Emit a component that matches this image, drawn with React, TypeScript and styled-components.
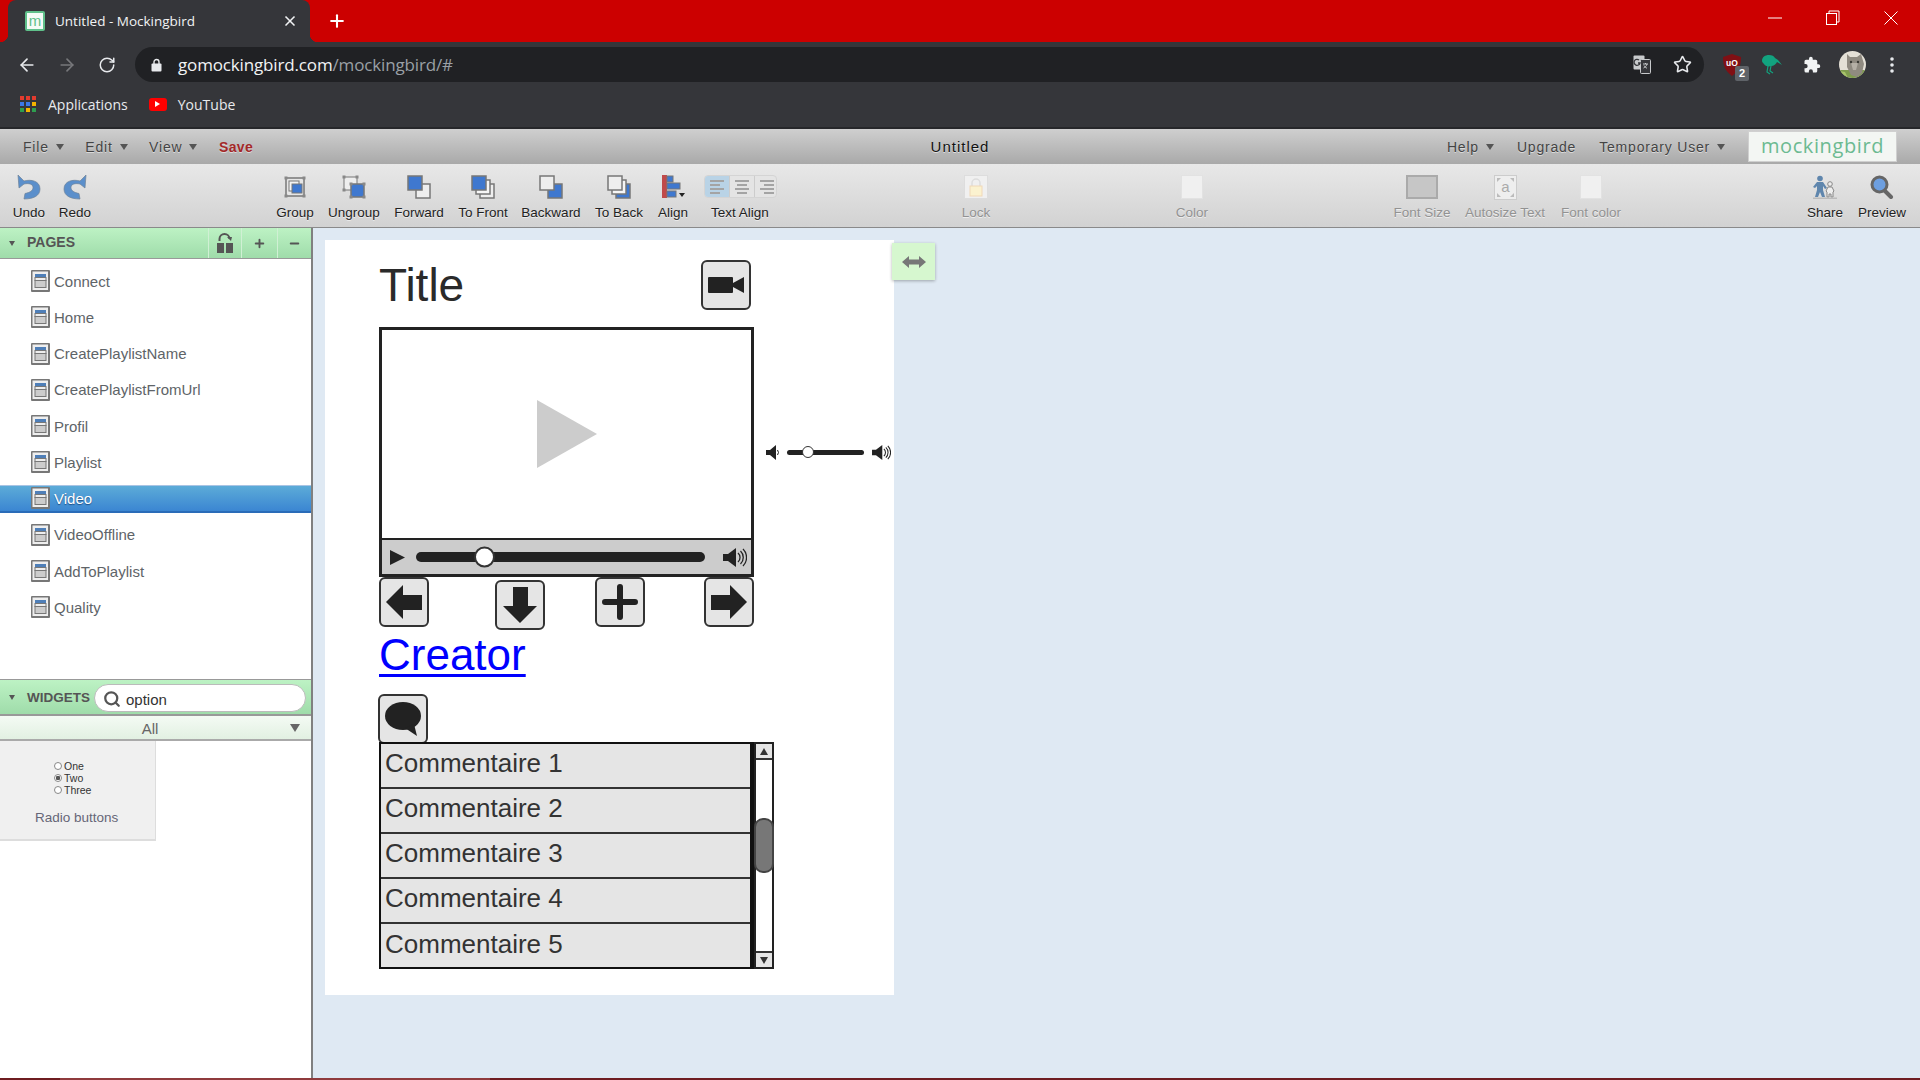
import React from 'react'
import styled, { createGlobalStyle } from 'styled-components'
import { ArrowLeft, ArrowRight, RotateCw, Star, Search, X, Plus, Minus } from 'lucide-react'

const PAGES = [
  'Connect',
  'Home',
  'CreatePlaylistName',
  'CreatePlaylistFromUrl',
  'Profil',
  'Playlist',
  'Video',
  'VideoOffline',
  'AddToPlaylist',
  'Quality',
]

const COMMENTS = ['Commentaire 1', 'Commentaire 2', 'Commentaire 3', 'Commentaire 4', 'Commentaire 5']

const APP_COLORS = ['#e33b2e', '#e33b2e', '#e33b2e', '#3b78e7', '#3b78e7', '#f4b400', '#2e9e4f', '#f4b400', '#2e9e4f']

const BLUE = '#3f78cf'
const EDGE = '#777'

const GroupIcon = () => (
  <svg width="24" height="24" viewBox="0 0 24 24">
    <rect x="3" y="3" width="18" height="18" fill="#e6e6e6" stroke={EDGE} strokeWidth="1.5" />
    <rect x="6" y="6" width="10" height="10" fill="#f4f4f4" stroke={EDGE} />
    <rect x="9" y="9" width="10" height="9" fill={BLUE} stroke={EDGE} />
    {[3, 21].map((x) => [3, 21].map((y) => <rect key={`${x}${y}`} x={x - 1.5} y={y - 1.5} width="3" height="3" fill="#888" />))}
  </svg>
)

const UngroupIcon = () => (
  <svg width="24" height="24" viewBox="0 0 24 24">
    <rect x="2" y="2" width="13" height="13" fill="#eee" stroke={EDGE} />
    <rect x="9" y="9" width="13" height="13" fill={BLUE} stroke={EDGE} strokeWidth="1.5" />
    {[[2, 2], [15, 2], [2, 15], [9, 9], [22, 9], [9, 22], [22, 22]].map(([x, y]) => (
      <rect key={`${x}${y}`} x={x - 1.5} y={y - 1.5} width="3" height="3" fill="#888" />
    ))}
  </svg>
)

const StackIcon = ({ top, middle }: { top: 'blue' | 'white'; middle?: boolean }) => {
  const upper = top === 'blue' ? BLUE : '#eee'
  const lower = top === 'blue' ? '#eee' : BLUE
  return (
    <svg width="24" height="24" viewBox="0 0 24 24">
      <rect x="9" y="9" width="14" height="14" fill={lower} stroke={EDGE} strokeWidth="1.5" />
      {middle && <rect x="5" y="5" width="14" height="14" fill="#f6f6f6" stroke={EDGE} strokeWidth="1.5" />}
      <rect x="1" y="1" width="14" height="14" fill={upper} stroke={EDGE} strokeWidth="1.5" />
    </svg>
  )
}

const AlignIcon = () => (
  <svg width="24" height="24" viewBox="0 0 24 24">
    <rect x="1" y="0" width="5" height="23" fill="#c04a4a" />
    <rect x="6" y="1" width="6" height="6" fill={BLUE} stroke={EDGE} />
    <rect x="6" y="8" width="13" height="6" fill={BLUE} stroke={EDGE} />
    <rect x="6" y="16" width="9" height="6" fill={BLUE} stroke={EDGE} />
    <path d="M18 18h6l-3 4z" fill="#222" />
  </svg>
)

const CurveArrow = ({ flip }: { flip?: boolean }) => (
  <svg width="24" height="25" viewBox="0 0 24 25" style={flip ? { transform: 'scaleX(-1)' } : undefined}>
    <path
      d="M1 0l1 13 5-4c5-1 9 0 9 3.500 0 3-3 5-8 6l-1 5.500c9 0 16-3 16-10 0-8-9-10-16-8z"
      fill="#5b8fcb"
      stroke="#6f8298"
      strokeWidth="0.7"
    />
  </svg>
)

const FadedLock = () => (
  <svg width="24" height="24" viewBox="0 0 24 24">
    <rect x="0.5" y="0.5" width="23" height="23" fill="#f0f0f0" stroke="#ddd" />
    <path d="M8 11V8a4 4 0 0 1 8 0v3" fill="none" stroke="#ddd" strokeWidth="1.5" />
    <rect x="6" y="11" width="12" height="10" fill="#fbf2cf" stroke="#f0d8b8" />
  </svg>
)

const AutosizeIcon = () => (
  <svg width="23" height="25" viewBox="0 0 23 25">
    <rect x="0.5" y="0.5" width="22" height="24" fill="#eee" stroke="#ccc" />
    <path d="M3 3h4l-4 4zM20 3h-4l4 4zM3 22h4l-4-4zM20 22h-4l4-4z" fill="#bbb" />
    <text x="11.5" y="17" fontSize="15" fill="#aaa" textAnchor="middle" fontFamily="'Liberation Sans', sans-serif">
      a
    </text>
  </svg>
)

const ShareIcon = () => (
  <svg width="26" height="24" viewBox="0 0 26 24">
    <circle cx="8" cy="3.5" r="2.8" fill="#5f86ad" />
    <path d="M5 7h6l4 6-2 1-2-3v4l2 7h-3l-2-5-2 5H3l2-7v-4l-2 2-2-1z" fill="#5f86ad" />
    <circle cx="18" cy="9" r="2.3" fill="#eee" stroke="#888" />
    <path d="M16 12h4l2 4-1 1v5h-2v-3h-2v3h-2v-5l-1-1z" fill="#eee" stroke="#888" />
    <rect x="1" y="22.5" width="24" height="1.5" fill="#bbb" />
  </svg>
)

const PreviewIcon = () => (
  <svg width="24" height="24" viewBox="0 0 24 24">
    <path d="M14 15l7 7" stroke="#666" strokeWidth="4" strokeLinecap="round" />
    <circle cx="9.5" cy="9.5" r="7.5" fill="#6d9fe0" stroke="#666" strokeWidth="3" />
  </svg>
)

const PageIcon = () => (
  <svg width="19" height="22" viewBox="0 0 19 22">
    <rect x="0" y="0" width="19" height="22" rx="1" fill="#777" />
    <rect x="1.5" y="1.5" width="15.500" height="18.500" fill="#eee" />
    <rect x="4" y="4" width="11" height="3" fill="#4f7fb8" />
    <rect x="4" y="7.500" width="11" height="3" fill="#eee" stroke="#777" />
    <rect x="4" y="10.500" width="11" height="7" fill="#ccc" stroke="#777" />
  </svg>
)

const OpenLockIcon = () => (
  <svg width="16" height="20" viewBox="0 0 16 20">
    <path d="M2.5 8V6a5 5 0 0 1 10 0" fill="none" stroke="#555" strokeWidth="2" />
    <path d="M10 4h5l-1 4z" fill="#555" />
    <rect x="0" y="10" width="7" height="10" fill="#555" />
    <rect x="9" y="10" width="7" height="10" fill="#555" />
  </svg>
)

const SmallSpeaker = () => (
  <svg width="14" height="15" viewBox="0 0 14 15">
    <path d="M0 5h4l6-5v15l-6-5H0z" fill="#222" />
    <path d="M11.500 5a4 4 0 0 1 0 5" fill="none" stroke="#222" strokeWidth="1" />
  </svg>
)

const LoudSpeaker = ({ w, h }: { w: number; h: number }) => (
  <svg width={w} height={h} viewBox="0 0 24 19">
    <path d="M0 6h5l8-6v19l-8-6H0z" fill="#222" />
    <path d="M15 5a6 6 0 0 1 0 9M17.500 3a9 9 0 0 1 0 13M20 1a12 12 0 0 1 0 17" fill="none" stroke="#222" strokeWidth="1.3" />
  </svg>
)

const CatAvatar = () => (
  <svg width="27" height="27" viewBox="0 0 27 27">
    <defs>
      <clipPath id="avatar-clip">
        <circle cx="13.500" cy="13.500" r="13.500" />
      </clipPath>
    </defs>
    <g clipPath="url(#avatar-clip)">
      <rect width="27" height="27" fill="#e4e0d6" />
      <rect x="0" y="19" width="27" height="8" fill="#7f9c4e" />
      <path d="M8 3l3 3h7l4-3 3 10-2 9-5 4-6-2-4-8z" fill="#8f8a80" />
      <path d="M12 12h7l-2 7h-3z" fill="#b5b0a6" />
      <circle cx="12" cy="11" r="1.200" fill="#3a3a34" />
      <circle cx="19" cy="11" r="1.200" fill="#3a3a34" />
      <path d="M0 20l6 1 3 6H0z" fill="#a8c46a" />
    </g>
  </svg>
)

const GlobalStyle = createGlobalStyle`
  html, body {
    margin: 0;
    padding: 0;
    background: #fff;
  }
  * {
    box-sizing: border-box;
  }
`

const Screen = styled.div`
  width: 1920px;
  height: 1080px;
  overflow: hidden;
  display: flex;
  flex-direction: column;
  font-family: 'Liberation Sans', Arial, sans-serif;
`

const TabStrip = styled.div`
  height: 42px;
  flex: none;
  background: #cc0000;
  display: flex;
  align-items: flex-start;
  padding-left: 8px;
`

const Tab = styled.div`
  position: relative;
  width: 302px;
  height: 42px;
  background: #35363a;
  border-radius: 8px 8px 0 0;
  display: flex;
  align-items: center;
  padding: 0 12px 0 17px;
  color: #f1f3f4;

  &::before,
  &::after {
    content: '';
    position: absolute;
    bottom: 0;
    width: 8px;
    height: 8px;
  }
  &::before {
    left: -8px;
    background: radial-gradient(circle at 0 0, transparent 8px, #35363a 8.5px);
  }
  &::after {
    right: -8px;
    background: radial-gradient(circle at 100% 0, transparent 8px, #35363a 8.5px);
  }
`

const Favicon = styled.div`
  width: 20px;
  height: 20px;
  flex: none;
  background: #f4fbf6;
  border: 2px solid #5fc08a;
  border-radius: 2px;
  color: #5fc08a;
  font-size: 15px;
  line-height: 15px;
  text-align: center;
`

const TabTitle = styled.div`
  margin-left: 10px;
  flex: 1;
  font-family: 'Open Sans', sans-serif;
  font-size: 13.5px;
  white-space: nowrap;
`

const NewTab = styled.div`
  width: 30px;
  height: 42px;
  margin-left: 12px;
  display: flex;
  align-items: center;
  justify-content: center;
  color: #fff;
`

const WindowControls = styled.div`
  margin-left: auto;
  display: flex;
`

const WindowButton = styled.div`
  width: 58px;
  height: 36px;
  display: flex;
  align-items: center;
  justify-content: center;
  color: #fff;
`

const NavRow = styled.div`
  height: 40px;
  flex: none;
  background: #35363a;
  display: flex;
  align-items: flex-start;
  padding: 5px 8px 0 7px;
`

const NavButton = styled.div`
  width: 40px;
  height: 35px;
  flex: none;
  display: flex;
  align-items: center;
  justify-content: center;
  color: ${(p: { $muted?: boolean }) => (p.$muted ? '#77787b' : '#e8eaed')};
  position: relative;
`

const Omnibox = styled.div`
  flex: 1;
  height: 35px;
  margin: 0 8px;
  background: #202124;
  border-radius: 18px;
  display: flex;
  align-items: center;
  padding: 0 2px 0 16px;
`

const Url = styled.div`
  margin-left: 16px;
  flex: 1;
  font-family: 'Open Sans', sans-serif;
  font-size: 17px;
  letter-spacing: -0.15px;
  color: #f1f3f4;

  span {
    color: #9aa0a6;
  }
`

const ExtBadge = styled.div`
  position: absolute;
  right: 3px;
  bottom: 1px;
  width: 14px;
  height: 15px;
  background: #5f6368;
  border-radius: 2px;
  color: #fff;
  font-size: 11px;
  font-weight: bold;
  line-height: 15px;
  text-align: center;
`

const Bookmarks = styled.div`
  height: 45px;
  flex: none;
  background: #35363a;
  display: flex;
  align-items: center;
  padding: 0 0 1px 20px;
  color: #e8eaed;
  font-family: 'Open Sans', sans-serif;
  font-size: 14px;
`

const AppsGrid = styled.div`
  width: 16px;
  height: 16px;
  display: grid;
  grid-template-columns: repeat(3, 4px);
  grid-auto-rows: 4px;
  gap: 2px;
  margin-right: 12px;
`

const AppsDot = styled.i<{ $color: string }>`
  display: block;
  background: ${(p) => p.$color};
`

const YouTubeMark = styled.div`
  width: 18px;
  height: 13px;
  margin: 0 11px 0 21px;
  background: #f00;
  border-radius: 3px;
  display: flex;
  align-items: center;
  justify-content: center;

  &::after {
    content: '';
    border-left: 5px solid #fff;
    border-top: 3px solid transparent;
    border-bottom: 3px solid transparent;
  }
`

const DarkRule = styled.div`
  height: 2px;
  flex: none;
  background: #26272a;
`

const MenuBar = styled.div`
  height: 35px;
  flex: none;
  display: grid;
  grid-template-columns: 1fr auto 1fr;
  align-items: center;
  background: linear-gradient(180deg, #cfcfcf 0%, #a9a9a9 100%);
  padding: 0 23px;
`

const MenuGroup = styled.div<{ $end?: boolean }>`
  display: flex;
  align-items: center;
  gap: ${(p) => (p.$end ? 23 : 21.5)}px;
  justify-content: ${(p) => (p.$end ? 'flex-end' : 'flex-start')};
`

const MenuItem = styled.div<{ $save?: boolean }>`
  display: flex;
  align-items: center;
  gap: 7px;
  font-size: 14px;
  letter-spacing: ${(p) => (p.$save ? 0.4 : 0.8)}px;
  color: ${(p) => (p.$save ? '#a32828' : '#444')};
  text-shadow: 0 1px 0 rgba(255, 255, 255, 0.5);
  font-weight: ${(p) => (p.$save ? 'bold' : 'normal')};
`

const DocTitle = styled.div`
  margin-top: -1px;
  font-size: 15px;
  letter-spacing: 1px;
  color: #111;
  text-shadow: 0 1px 0 rgba(255, 255, 255, 0.6);
`

const Caret = styled.i<{ $w?: number; $color?: string }>`
  display: block;
  flex: none;
  width: 0;
  height: 0;
  border-left: ${(p) => (p.$w ?? 8) / 2}px solid transparent;
  border-right: ${(p) => (p.$w ?? 8) / 2}px solid transparent;
  border-top: ${(p) => (p.$w ?? 8) * 0.75}px solid ${(p) => p.$color ?? '#555'};
`

const Logo = styled.div`
  width: 149px;
  height: 31px;
  background: #f3f6f3;
  border: 1px solid #d0d0d0;
  color: #6cba91;
  font-family: 'Open Sans', sans-serif;
  font-size: 20px;
  letter-spacing: 0.6px;
  line-height: 27px;
  text-align: center;
`

const ToolBar = styled.div`
  height: 64px;
  flex: none;
  display: flex;
  padding-left: 6px;
  background: linear-gradient(180deg, #e8e8e8 0%, #d2d2d2 100%);
  border-bottom: 1px solid #8a8a8a;
`

const ToolItem = styled.div<{ $w: number; $before?: number; $off?: boolean }>`
  flex: none;
  width: ${(p) => p.$w}px;
  margin-left: ${(p) => p.$before ?? 0}px;
  display: flex;
  flex-direction: column;
  align-items: center;
  padding-top: 11px;
  font-size: 13.5px;
  color: ${(p) => (p.$off ? '#929292' : '#222')};
  white-space: nowrap;
`

const ToolIcon = styled.div`
  height: 26px;
  display: flex;
  align-items: flex-start;
  justify-content: center;
`

const ToolLabel = styled.div`
  margin-top: 3px;
  line-height: 18px;
  text-shadow: 0 1px 0 rgba(255, 255, 255, 0.6);
`

const Segmented = styled.div`
  width: 73px;
  height: 23px;
  display: flex;
  border: 1px solid #d4d4d4;
  border-radius: 4px;
  overflow: hidden;
  background: #e4e4e4;
`

const SegCell = styled.div<{ $active?: boolean; $align: string }>`
  flex: 1;
  display: flex;
  flex-direction: column;
  justify-content: center;
  align-items: ${(p) => p.$align};
  gap: 2px;
  padding: 0 5px;
  background: ${(p) => (p.$active ? '#b9d3e6' : 'transparent')};
  & + & {
    border-left: 1px solid #ccc;
  }
`

const SegLine = styled.i<{ $short?: boolean }>`
  display: block;
  height: 2px;
  width: ${(p) => (p.$short ? 10 : 14)}px;
  background: #a4a4a4;
`

const Swatch = styled.div<{ $w?: number; $gray?: boolean }>`
  width: ${(p) => p.$w ?? 22}px;
  height: 24px;
  background: ${(p) => (p.$gray ? '#c6c6c6' : '#f0f0f0')};
  border: ${(p) => (p.$gray ? '2px solid #aaa' : '1px solid #e2e2e2')};
`

const Main = styled.div`
  flex: 1;
  min-height: 0;
  display: flex;
`

const Sidebar = styled.div`
  width: 313px;
  flex: none;
  background: #fff;
  border-right: 2px solid #808080;
  display: flex;
  flex-direction: column;
`

const PanelHeader = styled.div`
  height: 31px;
  flex: none;
  display: flex;
  align-items: center;
  padding-left: 9px;
  background: linear-gradient(180deg, #bdf2c4 0%, #9fdcaa 100%);
  border-bottom: 1px solid #999;
`

const PanelTitle = styled.div`
  margin: -2px 0 0 12px;
  flex: 1;
  font-size: 14px;
  font-weight: bold;
  color: #555;
`

const HeaderAction = styled.div<{ $w: number }>`
  width: ${(p) => p.$w}px;
  height: 100%;
  flex: none;
  display: flex;
  align-items: center;
  justify-content: center;
  border-left: 1px solid #d0f0d4;
  color: #555;
`

const PageList = styled.div`
  flex: 1;
  display: flex;
  flex-direction: column;
  gap: 8.25px;
  padding-top: 8px;
`

const PageRow = styled.div<{ $selected?: boolean }>`
  height: 28px;
  flex: none;
  display: flex;
  align-items: center;
  gap: 4px;
  padding-left: 31px;
  font-size: 15px;
  color: ${(p) => (p.$selected ? '#fff' : '#5e6468')};
  background: ${(p) => (p.$selected ? 'linear-gradient(180deg, #5cabd8 0%, #3b86d2 100%)' : 'transparent')};
  border-top: ${(p) => (p.$selected ? '1px solid #a9c4e4' : '0')};
  border-bottom: ${(p) => (p.$selected ? '2px solid #2a6cb8' : '0')};
  text-shadow: ${(p) => (p.$selected ? '0 1px 1px #1d4f86' : 'none')};
`

const WidgetsHeader = styled.div`
  height: 37px;
  flex: none;
  display: flex;
  align-items: center;
  padding: 0 4px 0 9px;
  background: linear-gradient(180deg, #bdf2c4 0%, #9fdcaa 100%);
  border-top: 1px solid #999;
  border-bottom: 2px solid #999;
`

const WidgetsTitle = styled.div`
  margin-left: 12px;
  font-size: 13.5px;
  font-weight: bold;
  color: #555;
`

const SearchBox = styled.div`
  width: 212px;
  height: 28px;
  margin: 2px 0 0 4px;
  background: #fff;
  border: 1px solid #bbb;
  border-radius: 14px;
  display: flex;
  align-items: center;
  gap: 5px;
  padding: 2px 0 0 8px;
  font-size: 15px;
  color: #333;
`

const FilterBar = styled.div`
  height: 25px;
  flex: none;
  background: linear-gradient(180deg, #f4fbf4 0%, #e2f0e2 100%);
  border-bottom: 2px solid #aaa;
  display: flex;
  align-items: center;
  padding: 1px 11px 0 0;
  font-size: 15px;
  color: #666;
`

const FilterLabel = styled.div`
  flex: 1;
  text-align: center;
  padding-left: 10px;
`

const WidgetShelf = styled.div`
  height: 337px;
  flex: none;
`

const WidgetCard = styled.div`
  width: 156px;
  height: 100px;
  background: #f0f0f0;
  border-right: 1px solid #ddd;
  border-bottom: 2px solid #ddd;
  padding: 19px 0 0 54px;
`

const RadioRow = styled.div`
  height: 12px;
  display: flex;
  align-items: center;
  gap: 2px;
  font-size: 10.5px;
  color: #333;
`

const RadioDot = styled.i<{ $checked?: boolean }>`
  display: block;
  width: 8px;
  height: 8px;
  border-radius: 50%;
  border: 1px solid #888;
  background: ${(p) => (p.$checked ? 'radial-gradient(circle, #555 0 2px, #fff 2.5px)' : '#fff')};
`

const CardLabel = styled.div`
  margin: 14px 0 0 -19px;
  font-size: 13.5px;
  color: #667;
`

const Workspace = styled.div`
  flex: 1;
  background: #dfe9f3;
  padding: 12px 0 0 12px;
`

const Page = styled.div`
  position: relative;
  width: 569px;
  height: 755px;
  background: #fff;
  color: #222;
`

const ResizeHandle = styled.div`
  position: absolute;
  left: 567px;
  top: 3px;
  width: 43px;
  height: 37px;
  background: #d6f7cf;
  box-shadow: 0 1px 3px rgba(0, 0, 0, 0.3);
  display: flex;
  align-items: center;
  justify-content: center;
`

const TitleText = styled.div`
  position: absolute;
  left: 54px;
  top: 22px;
  font-size: 46px;
  line-height: 46px;
  color: #2a2a2a;
`

const SketchButton = styled.div<{ $x: number; $y: number }>`
  position: absolute;
  left: ${(p) => p.$x}px;
  top: ${(p) => p.$y}px;
  width: 50px;
  height: 50px;
  background: #e5e5e5;
  border: 2px solid #333;
  border-radius: 6px;
  display: flex;
  align-items: center;
  justify-content: center;
`

const VideoFrame = styled.div`
  position: absolute;
  left: 54px;
  top: 87px;
  width: 375px;
  height: 250px;
  border: 3px solid #222;
  display: flex;
  flex-direction: column;
`

const VideoScreen = styled.div`
  flex: 1;
  display: flex;
  align-items: center;
  justify-content: center;
`

const VideoControls = styled.div`
  height: 36px;
  flex: none;
  background: #ccc;
  border-top: 2px solid #222;
  display: flex;
  align-items: center;
  padding: 0 4px 0 8px;
`

const Track = styled.div<{ $h: number; $ml: number; $mr: number }>`
  position: relative;
  flex: 1;
  height: ${(p) => p.$h}px;
  margin: 0 ${(p) => p.$mr}px 0 ${(p) => p.$ml}px;
  background: #222;
  border-radius: ${(p) => p.$h / 2}px;
`

const Knob = styled.div<{ $size: number; $left: number; $border: number }>`
  position: absolute;
  left: ${(p) => p.$left}px;
  top: 50%;
  width: ${(p) => p.$size}px;
  height: ${(p) => p.$size}px;
  transform: translateY(-50%);
  background: #fff;
  border: ${(p) => p.$border}px solid #333;
  border-radius: 50%;
`

const VolumeWidget = styled.div`
  position: absolute;
  left: 441px;
  top: 204px;
  width: 125px;
  height: 16px;
  display: flex;
  align-items: center;
`

const CreatorLink = styled.a`
  position: absolute;
  left: 54px;
  top: 393px;
  font-size: 44px;
  line-height: 44px;
  color: #0000ff;
  text-decoration: underline;
  text-decoration-thickness: 3px;
  text-underline-offset: 4px;
`

const CommentList = styled.div`
  position: absolute;
  left: 54px;
  top: 502px;
  width: 375px;
  height: 227px;
  border: 2px solid #111;
  border-right-width: 4px;
  display: flex;
  flex-direction: column;
`

const CommentRow = styled.div`
  flex: 1;
  background: #e5e5e5;
  border-bottom: 2px solid #333;
  padding-left: 4px;
  font-size: 26px;
  line-height: 38px;
  color: #333;
  &:last-child {
    border-bottom: 0;
    line-height: 40px;
  }
`

const Scrollbar = styled.div`
  position: absolute;
  left: 429px;
  top: 502px;
  width: 20px;
  height: 227px;
  background: #fff;
  border: 2px solid #222;
  display: flex;
  flex-direction: column;
  justify-content: space-between;
`

const ScrollArrow = styled.div<{ $down?: boolean }>`
  height: 16px;
  background: #e5e5e5;
  border-${(p) => (p.$down ? 'top' : 'bottom')}: 2px solid #333;
  display: flex;
  align-items: center;
  justify-content: center;
  color: #333;

  &::after {
    content: '';
    border-left: 4px solid transparent;
    border-right: 4px solid transparent;
    border-${(p) => (p.$down ? 'top' : 'bottom')}: 7px solid #333;
  }
`

const ScrollThumb = styled.div`
  position: absolute;
  left: -2px;
  top: 74px;
  width: 20px;
  height: 55px;
  background: #777;
  border: 2px solid #444;
  border-radius: 9px;
`

const BottomStrip = styled.div`
  height: 2px;
  flex: none;
  background: linear-gradient(90deg, #6e1c20 0 60px, #8f3a3c 60px 490px, #6e1c20 490px);
`

const App = () => {
  return (
    <Screen>
      <GlobalStyle />
      <TabStrip>
        <Tab>
          <Favicon>m</Favicon>
          <TabTitle>Untitled - Mockingbird</TabTitle>
          <X size={16} strokeWidth={2.5} />
        </Tab>
        <NewTab>
          <Plus size={20} strokeWidth={2.5} />
        </NewTab>
        <WindowControls>
          <WindowButton>
            <svg width="14" height="2" viewBox="0 0 14 2" stroke="#fff">
              <path d="M0 1h14" />
            </svg>
          </WindowButton>
          <WindowButton>
            <svg width="14" height="16" viewBox="0 0 14 16" fill="none" stroke="#fff">
              <rect x="0.5" y="3.500" width="10" height="11" />
              <path d="M3 3V1h10v11h-2.500" />
            </svg>
          </WindowButton>
          <WindowButton>
            <svg width="14" height="14" viewBox="0 0 14 14" stroke="#fff">
              <path d="M0.5 0.5l13 13M13.500 0.5l-13 13" />
            </svg>
          </WindowButton>
        </WindowControls>
      </TabStrip>

      <NavRow>
        <NavButton>
          <ArrowLeft size={20} strokeWidth={2} />
        </NavButton>
        <NavButton $muted>
          <ArrowRight size={20} strokeWidth={2} />
        </NavButton>
        <NavButton>
          <RotateCw size={18} strokeWidth={2} />
        </NavButton>
        <Omnibox>
          <svg width="11" height="14" viewBox="0 0 11 14">
            <path d="M3 6V4a2.500 2.500 0 0 1 5 0v2" fill="none" stroke="#e8eaed" strokeWidth="1.4" />
            <rect x="0.5" y="5.500" width="10" height="8" rx="1" fill="#e8eaed" />
          </svg>
          <Url>
            gomockingbird.com<span>/mockingbird/#</span>
          </Url>
          <NavButton>
            <svg width="18" height="19" viewBox="0 0 18 19">
              <rect x="0.5" y="0.5" width="11" height="14" rx="1" fill="#c8cacc" />
              <rect x="7.500" y="4.500" width="10" height="14" rx="1" fill="#35363a" stroke="#c8cacc" />
              <path d="M6 5a3 3 0 1 0 1 3H5" fill="none" stroke="#35363a" strokeWidth="1.3" />
              <path d="M10 9h5M12.500 8v1M14 9c-.5 2-2 3.500-3.500 4M11 10.500c.5 1.200 1.800 2.200 3 2.700" fill="none" stroke="#c8cacc" />
            </svg>
          </NavButton>
          <NavButton>
            <Star size={19} strokeWidth={2} />
          </NavButton>
        </Omnibox>
        <NavButton>
          <svg width="20" height="24" viewBox="0 0 20 24">
            <path d="M10 1l9 3c0 8-2 14-9 19C3 18 1 12 1 4z" fill="#800f14" />
            <text x="10" y="13" fontSize="8.5" fontWeight="bold" fill="#fff" textAnchor="middle" fontFamily="'Liberation Sans', sans-serif">
              uO
            </text>
          </svg>
          <ExtBadge>2</ExtBadge>
        </NavButton>
        <NavButton>
          <svg width="20" height="22" viewBox="0 0 20 22" fill="#12a37f">
            <path d="M0 7c0-4 3-6 7-6 3 0 5 1 6 3 1 1 2 1 3 2l4 5-5-3c-1 2-3 4-6 4-3 1-6 0-7-2-1-1-2-2-2-3z" />
            <path d="M6 12l-1 6 3 2M9 12l-1 5 3 2" fill="none" stroke="#12a37f" strokeWidth="1.200" />
          </svg>
        </NavButton>
        <NavButton>
          <svg width="18" height="18" viewBox="0 0 24 24">
            <path
              fill="#f1f3f4"
              d="M20.500 11H19V7a2 2 0 0 0-2-2h-4V3.500a2.500 2.500 0 0 0-5 0V5H4a2 2 0 0 0-2 2v3.800h1.500a2.700 2.700 0 0 1 0 5.400H2V20a2 2 0 0 0 2 2h3.800v-1.500a2.700 2.700 0 0 1 5.400 0V22H17a2 2 0 0 0 2-2v-4h1.500a2.500 2.500 0 0 0 0-5z"
            />
          </svg>
        </NavButton>
        <NavButton>
          <CatAvatar />
        </NavButton>
        <NavButton>
          <svg width="4" height="16" viewBox="0 0 4 16" fill="#e8eaed">
            <circle cx="2" cy="2" r="1.800" />
            <circle cx="2" cy="8" r="1.800" />
            <circle cx="2" cy="14" r="1.800" />
          </svg>
        </NavButton>
      </NavRow>

      <Bookmarks>
        <AppsGrid>
          {APP_COLORS.map((color, i) => (
            <AppsDot key={i} $color={color} />
          ))}
        </AppsGrid>
        Applications
        <YouTubeMark />
        YouTube
      </Bookmarks>
      <DarkRule />

      <MenuBar>
        <MenuGroup>
          <MenuItem>
            File <Caret />
          </MenuItem>
          <MenuItem>
            Edit <Caret />
          </MenuItem>
          <MenuItem>
            View <Caret />
          </MenuItem>
          <MenuItem $save>Save</MenuItem>
        </MenuGroup>
        <DocTitle>Untitled</DocTitle>
        <MenuGroup $end>
          <MenuItem>
            Help <Caret />
          </MenuItem>
          <MenuItem>Upgrade</MenuItem>
          <MenuItem>
            Temporary User <Caret />
          </MenuItem>
          <Logo>mockingbird</Logo>
        </MenuGroup>
      </MenuBar>

      <ToolBar>
        <ToolItem $w={46}>
          <ToolIcon>
            <CurveArrow />
          </ToolIcon>
          <ToolLabel>Undo</ToolLabel>
        </ToolItem>
        <ToolItem $w={46}>
          <ToolIcon>
            <CurveArrow flip />
          </ToolIcon>
          <ToolLabel>Redo</ToolLabel>
        </ToolItem>
        <ToolItem $w={60} $before={167}>
          <ToolIcon>
            <GroupIcon />
          </ToolIcon>
          <ToolLabel>Group</ToolLabel>
        </ToolItem>
        <ToolItem $w={58}>
          <ToolIcon>
            <UngroupIcon />
          </ToolIcon>
          <ToolLabel>Ungroup</ToolLabel>
        </ToolItem>
        <ToolItem $w={72}>
          <ToolIcon>
            <StackIcon top="blue" />
          </ToolIcon>
          <ToolLabel>Forward</ToolLabel>
        </ToolItem>
        <ToolItem $w={56}>
          <ToolIcon>
            <StackIcon top="blue" middle />
          </ToolIcon>
          <ToolLabel>To Front</ToolLabel>
        </ToolItem>
        <ToolItem $w={80}>
          <ToolIcon>
            <StackIcon top="white" />
          </ToolIcon>
          <ToolLabel>Backward</ToolLabel>
        </ToolItem>
        <ToolItem $w={56}>
          <ToolIcon>
            <StackIcon top="white" middle />
          </ToolIcon>
          <ToolLabel>To Back</ToolLabel>
        </ToolItem>
        <ToolItem $w={52}>
          <ToolIcon>
            <AlignIcon />
          </ToolIcon>
          <ToolLabel>Align</ToolLabel>
        </ToolItem>
        <ToolItem $w={82}>
          <ToolIcon>
            <Segmented>
              <SegCell $active $align="flex-start">
                <SegLine />
                <SegLine $short />
                <SegLine />
                <SegLine $short />
              </SegCell>
              <SegCell $align="center">
                <SegLine />
                <SegLine $short />
                <SegLine />
                <SegLine $short />
              </SegCell>
              <SegCell $align="flex-end">
                <SegLine />
                <SegLine $short />
                <SegLine />
                <SegLine $short />
              </SegCell>
            </Segmented>
          </ToolIcon>
          <ToolLabel>Text Align</ToolLabel>
        </ToolItem>
        <ToolItem $w={60} $before={165} $off>
          <ToolIcon>
            <FadedLock />
          </ToolIcon>
          <ToolLabel>Lock</ToolLabel>
        </ToolItem>
        <ToolItem $w={60} $before={156} $off>
          <ToolIcon>
            <Swatch />
          </ToolIcon>
          <ToolLabel>Color</ToolLabel>
        </ToolItem>
        <ToolItem $w={70} $before={165} $off>
          <ToolIcon>
            <Swatch $w={32} $gray />
          </ToolIcon>
          <ToolLabel>Font Size</ToolLabel>
        </ToolItem>
        <ToolItem $w={96} $off>
          <ToolIcon>
            <AutosizeIcon />
          </ToolIcon>
          <ToolLabel>Autosize Text</ToolLabel>
        </ToolItem>
        <ToolItem $w={76} $off>
          <ToolIcon>
            <Swatch />
          </ToolIcon>
          <ToolLabel>Font color</ToolLabel>
        </ToolItem>
        <ToolItem $w={56} $before={168}>
          <ToolIcon>
            <ShareIcon />
          </ToolIcon>
          <ToolLabel>Share</ToolLabel>
        </ToolItem>
        <ToolItem $w={58}>
          <ToolIcon>
            <PreviewIcon />
          </ToolIcon>
          <ToolLabel>Preview</ToolLabel>
        </ToolItem>
      </ToolBar>

      <Main>
        <Sidebar>
          <PanelHeader>
            <Caret $w={7} />
            <PanelTitle>PAGES</PanelTitle>
            <HeaderAction $w={33}>
              <OpenLockIcon />
            </HeaderAction>
            <HeaderAction $w={36}>
              <Plus size={13} strokeWidth={3.5} />
            </HeaderAction>
            <HeaderAction $w={34}>
              <Minus size={13} strokeWidth={3.5} />
            </HeaderAction>
          </PanelHeader>
          <PageList>
            {PAGES.map((page) => (
              <PageRow key={page} $selected={page === 'Video'}>
                <PageIcon />
                {page}
              </PageRow>
            ))}
          </PageList>
          <WidgetsHeader>
            <Caret $w={7} />
            <WidgetsTitle>WIDGETS</WidgetsTitle>
            <SearchBox>
              <Search size={18} strokeWidth={3} color="#555" />
              option
            </SearchBox>
          </WidgetsHeader>
          <FilterBar>
            <FilterLabel>All</FilterLabel>
            <Caret $w={11} $color="#666" />
          </FilterBar>
          <WidgetShelf>
            <WidgetCard>
              <RadioRow>
                <RadioDot />
                One
              </RadioRow>
              <RadioRow>
                <RadioDot $checked />
                Two
              </RadioRow>
              <RadioRow>
                <RadioDot />
                Three
              </RadioRow>
              <CardLabel>Radio buttons</CardLabel>
            </WidgetCard>
          </WidgetShelf>
        </Sidebar>

        <Workspace>
          <Page>
            <TitleText>Title</TitleText>
            <SketchButton $x={376} $y={20}>
              <svg width="36" height="16" viewBox="0 0 36 16" fill="#222">
                <rect x="0" y="0" width="25" height="16" rx="1" />
                <path d="M25 6l11-6v16l-11-6z" />
              </svg>
            </SketchButton>

            <VideoFrame>
              <VideoScreen>
                <svg width="60" height="68" viewBox="0 0 60 68">
                  <path d="M0 0l60 34L0 68z" fill="#ccc" />
                </svg>
              </VideoScreen>
              <VideoControls>
                <svg width="15" height="15" viewBox="0 0 15 15">
                  <path d="M0 0l15 7.500L0 15z" fill="#222" />
                </svg>
                <Track $h={10} $ml={11} $mr={18}>
                  <Knob $size={21} $left={58} $border={2} />
                </Track>
                <LoudSpeaker w={24} h={19} />
              </VideoControls>
            </VideoFrame>

            <VolumeWidget>
              <SmallSpeaker />
              <Track $h={5} $ml={7} $mr={8}>
                <Knob $size={12} $left={15} $border={1} />
              </Track>
              <LoudSpeaker w={19} h={15} />
            </VolumeWidget>

            <SketchButton $x={54} $y={337}>
              <svg width="36" height="36" viewBox="0 0 36 36" fill="#222">
                <path d="M0 18L17 1v10h19v15H17v9z" />
              </svg>
            </SketchButton>
            <SketchButton $x={170} $y={340}>
              <svg width="36" height="36" viewBox="0 0 36 36" fill="#222">
                <path d="M18 36L1 19h10V0h15v19h9z" />
              </svg>
            </SketchButton>
            <SketchButton $x={270} $y={337}>
              <svg width="36" height="36" viewBox="0 0 36 36" stroke="#222" strokeWidth="6" strokeLinecap="round">
                <path d="M18 3v30M3 18h30" />
              </svg>
            </SketchButton>
            <SketchButton $x={379} $y={337}>
              <svg width="36" height="36" viewBox="0 0 36 36" fill="#222">
                <path d="M36 18L19 1v10H0v15h19v9z" />
              </svg>
            </SketchButton>

            <CreatorLink href="#">Creator</CreatorLink>

            <SketchButton $x={53} $y={454}>
              <svg width="36" height="36" viewBox="0 0 36 36" fill="#222">
                <ellipse cx="18" cy="15" rx="18" ry="14" />
                <path d="M20 27l12 8-3-12z" />
              </svg>
            </SketchButton>

            <CommentList>
              {COMMENTS.map((comment) => (
                <CommentRow key={comment}>{comment}</CommentRow>
              ))}
            </CommentList>
            <Scrollbar>
              <ScrollArrow />
              <ScrollThumb />
              <ScrollArrow $down />
            </Scrollbar>

            <ResizeHandle>
              <svg width="24" height="12" viewBox="0 0 24 12" fill="#777">
                <path d="M0 6l7-6v3.500h10V0l7 6-7 6V8.500H7V12z" />
              </svg>
            </ResizeHandle>
          </Page>
        </Workspace>
      </Main>
      <BottomStrip />
    </Screen>
  )
}

export default App
